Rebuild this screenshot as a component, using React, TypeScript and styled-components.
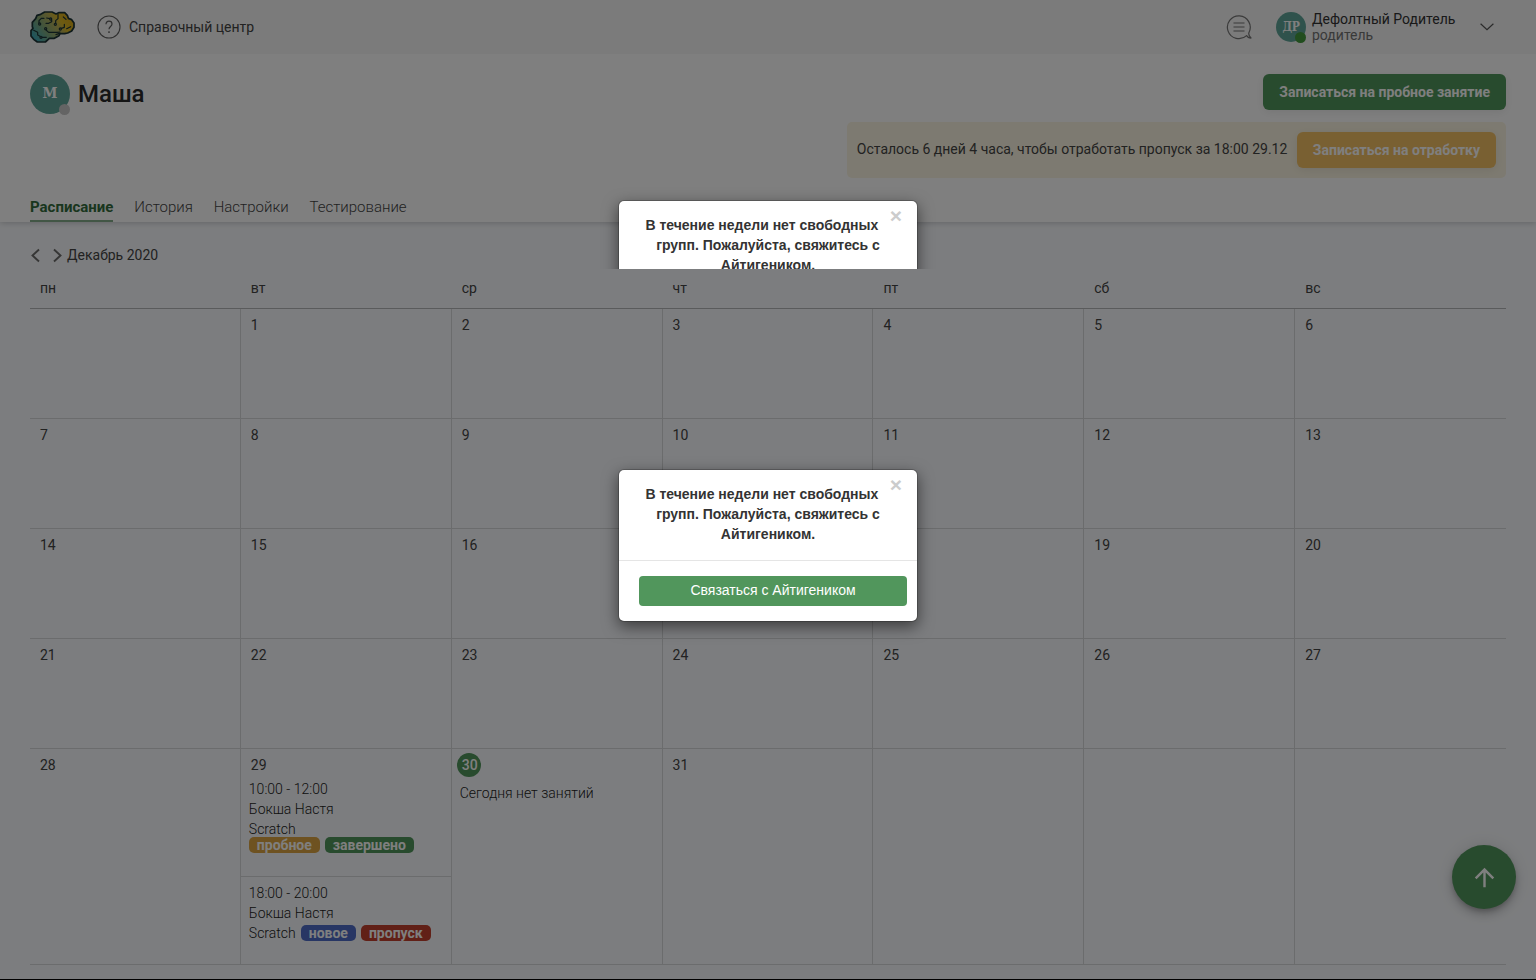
import React from 'react';
import styled, { createGlobalStyle } from 'styled-components';

const GREEN = '#51965c';

const GlobalStyle = createGlobalStyle`
  *, *::before, *::after { box-sizing: border-box; }
  body {
    margin: 0;
    font: 400 14px/20px Roboto, sans-serif;
    color: #444;
    background: #f9fbfe;
  }
  button { font: inherit; border: 0; cursor: pointer; }
`;

const Screen = styled.div`
  position: relative;
  height: 980px;
  overflow: hidden;
  border-bottom: 1px solid #000;
  background: #f9fbfe;
`;

const TopBar = styled.header`
  position: relative;
  z-index: 1;
  display: flex;
  align-items: center;
  height: 54px;
  padding: 0 30px;
  background: #f6f6f6;
`;

const HelpLink = styled.a`
  display: flex;
  align-items: center;
  gap: 8px;
  margin-left: 22px;
  color: #444;
`;

const UserArea = styled.div`
  display: flex;
  align-items: center;
  margin-left: auto;
  padding-right: 12px;
`;

const Avatar = styled.span<{ $size: number; $font: number }>`
  position: relative;
  display: flex;
  flex: none;
  align-items: center;
  justify-content: center;
  width: ${(p) => p.$size}px;
  height: ${(p) => p.$size}px;
  padding-bottom: 1px;
  border-radius: 50%;
  background: #5fa598;
  color: #fff;
  font: 700 ${(p) => p.$font}px/1 'DejaVu Serif Condensed', 'DejaVu Serif', serif;
  font-stretch: condensed;
`;

const UserAvatar = styled(Avatar)`
  margin-left: 24.5px;
  letter-spacing: -0.4px;
`;

const Status = styled.i<{ $online?: boolean }>`
  position: absolute;
  right: 0;
  bottom: -1px;
  width: 11px;
  height: 11px;
  border-radius: 50%;
  background: ${(p) => (p.$online ? '#439a3c' : '#c8c8c8')};
`;

const UserText = styled.div`
  width: 144px;
  margin: 0 24px 0 6px;
  line-height: 16px;
  white-space: nowrap;
  color: #333;
`;

const Role = styled.div`
  color: #737373;
`;

const Profile = styled.section`
  display: flex;
  flex-direction: column;
  height: 168px;
  padding: 20px 30px 0;
  background: #fff;
  box-shadow: 0 1px 6px rgba(0, 0, 0, 0.2);
`;

const ProfileTop = styled.div`
  display: flex;
  justify-content: space-between;
`;

const Person = styled.div`
  display: flex;
  align-items: center;
  gap: 8px;
  height: 40px;
`;

const PersonName = styled.h1`
  margin: 0;
  font-size: 24px;
  font-weight: 500;
  line-height: 28px;
  color: #2a2a2a;
`;

const Actions = styled.div`
  display: flex;
  flex-direction: column;
  align-items: flex-end;
  gap: 12px;
`;

const ActionButton = styled.button<{ $color: string }>`
  height: 36px;
  padding: 0 16px;
  border-radius: 6px;
  background: ${(p) => p.$color};
  box-shadow: 0 2px 10px rgba(0, 0, 0, 0.08);
  color: #fff;
  font-weight: 700;
  white-space: nowrap;
`;

const Notice = styled.div`
  display: flex;
  gap: 9.5px;
  height: 56px;
  padding: 10px 10px 10px 9.5px;
  border-radius: 5px;
  background: #fbf5e2;
`;

const NoticeText = styled.span`
  line-height: 34px;
`;

const Tabs = styled.nav`
  display: flex;
  gap: 20.9px;
  margin-top: auto;
`;

const Tab = styled.a<{ $active?: boolean }>`
  height: 26px;
  border-bottom: 2px solid ${(p) => (p.$active ? '#84ac8a' : 'transparent')};
  color: ${(p) => (p.$active ? '#336c3d' : '#444')};
  font-size: 15px;
  font-weight: ${(p) => (p.$active ? 700 : 300)};
  line-height: 22px;
`;

const Content = styled.main`
  padding: 23px 30px 0;
`;

const MonthNav = styled.div`
  display: flex;
  align-items: center;
  gap: 5px;
  height: 20px;
`;

const MonthLabel = styled.span`
  margin-left: -5px;
`;

const Week = styled.div<{ $height: number }>`
  display: grid;
  grid-template-columns: repeat(7, minmax(0, 1fr));
  height: ${(p) => p.$height}px;
  border-bottom: 1px solid #d6d8da;
`;

const WeekHeader = styled(Week)`
  margin-top: 4px;
  border-bottom-color: #b4b6b8;
`;

const Weekday = styled.div`
  padding: 9px 10px;
`;

const Day = styled.div`
  border-right: 1px solid #d6d8da;
  &:last-child { border-right: 0; }
`;

const DayNumber = styled.div`
  padding: 6px 10px 0;
`;

const Today = styled.div`
  width: 24px;
  height: 24px;
  margin: 4.4px 0 0 5px;
  padding-left: 5px;
  border-radius: 50%;
  background: ${GREEN};
  color: #fff;
  font-weight: 500;
  line-height: 24px;
`;

const Lesson = styled.div<{ $height: number; $divided?: boolean }>`
  height: ${(p) => p.$height}px;
  padding: ${(p) => (p.$divided ? 4 : 6)}px 8px 0;
  border-bottom: ${(p) => (p.$divided ? '1px solid #d6d8da' : '0')};
  color: #222;
  font-weight: 300;
`;

const LessonRow = styled.div`
  display: flex;
  align-items: center;
  gap: 5px;
`;

const BadgeRow = styled(LessonRow)`
  margin-top: -2px;
`;

const Badge = styled.span<{ $color: string }>`
  height: 16px;
  padding: 0 8px;
  border-radius: 5px;
  background: ${(p) => p.$color};
  color: #fff;
  font-weight: 700;
  line-height: 16px;
`;

const Empty = styled.div`
  padding: 5.5px 8px 0;
  color: #222;
  font-weight: 300;
`;

const ScrollTop = styled.button`
  position: absolute;
  right: 20px;
  bottom: 70px;
  display: flex;
  align-items: center;
  justify-content: center;
  width: 64px;
  height: 64px;
  padding: 0;
  border-radius: 50%;
  background: ${GREEN};
  box-shadow: 0 3px 5px -1px rgba(0, 0, 0, 0.2), 0 6px 10px rgba(0, 0, 0, 0.14), 0 1px 18px rgba(0, 0, 0, 0.12);
`;

const Backdrop = styled.div`
  position: absolute;
  inset: 0;
  z-index: 2;
  background: rgba(0, 0, 0, 0.5);
`;

const ModalLayer = styled.div<{ $height?: number; $top: number }>`
  position: absolute;
  z-index: 3;
  top: 0;
  left: 0;
  right: 0;
  display: flex;
  align-items: flex-start;
  justify-content: center;
  height: ${(p) => (p.$height ? `${p.$height}px` : '100%')};
  padding-top: ${(p) => p.$top}px;
  overflow: hidden;
`;

const Modal = styled.div`
  width: 300px;
  flex: none;
  border: 1px solid rgba(0, 0, 0, 0.2);
  border-radius: 6px;
  background: #fff;
  background-clip: padding-box;
  box-shadow: 0 5px 15px rgba(0, 0, 0, 0.5);
  font-family: 'Liberation Sans', Arial, sans-serif;
  color: #333;
`;

const ModalHeader = styled.div`
  height: 91px;
  padding: 14px 15px 15px;
  border-bottom: 1px solid #e5e5e5;
  font-weight: 700;
  text-align: center;
`;

const Close = styled.button`
  float: right;
  height: 18px;
  margin-top: -10px;
  padding: 0;
  background: none;
  color: #ccc;
  font-size: 21px;
  font-weight: 700;
  line-height: 21px;
`;

const ModalFooter = styled.div`
  padding: 15px;
`;

const ContactButton = styled.button`
  display: block;
  width: 268px;
  height: 30px;
  margin-left: 5px;
  padding: 0 0 2px;
  border-radius: 4px;
  background: ${GREEN};
  color: #fff;
`;

function BrainLogo() {
  return (
    <svg width="45" height="32" viewBox="90 33 135 96">
      <defs>
        <linearGradient id="brain" x1="0" y1="0.9" x2="1" y2="0.35">
          <stop offset="0" stopColor="#2fa8c6" />
          <stop offset="0.4" stopColor="#84a877" />
          <stop offset="0.65" stopColor="#b8b058" />
          <stop offset="0.78" stopColor="#dcb824" />
          <stop offset="1" stopColor="#d8a818" />
        </linearGradient>
      </defs>
      <g stroke="#1c3436" strokeWidth="5.2" strokeLinejoin="round" strokeLinecap="round">
        <path
          fill="url(#brain)"
          d="M134 36h22l12 6 8-4h18l8 8 3 9 10 4 7 10v13l-7 11-12 6-9 2h-14l-3 6-14 8h-15l-12 11h-24l-11-8-8-10V92l6-7-2-5V67l10-11 4-10 11-3z"
        />
        <g fill="none" strokeWidth="3.6">
          <path d="M117 69v-7l7-7h8M149 56l-9-2M155 60v5l-9 5h-8M167 70v-8l7-6V43M190 51l8 7M138 90l8 7h25l9-1M184 85l9-3v-9M200 86l12-6M120 109l-7-4v-8l-12-6M127 112h12M168 104l10-4" />
          <circle cx="119" cy="72" r="3.2" />
          <circle cx="152" cy="57" r="3.2" />
          <circle cx="166" cy="73" r="3.2" />
          <circle cx="137" cy="86" r="3.2" />
          <circle cx="181" cy="87" r="3.2" />
          <circle cx="123" cy="112" r="3.2" />
        </g>
      </g>
    </svg>
  );
}

function HelpIcon() {
  return (
    <svg width="24" height="24" viewBox="0 0 24 24" fill="none" stroke="#5e5e5e" strokeWidth="1.1">
      <circle cx="12" cy="12" r="11" />
      <path d="M9 9.2c0-1.9 1.2-3 3-3s3 1.1 3 2.8c0 2.4-3 2.7-3 5.3" strokeWidth="1.2" />
      <path d="M12 16.2v1.7" strokeWidth="1.4" />
    </svg>
  );
}

function ChatIcon() {
  return (
    <svg width="26" height="26" viewBox="0 0 26 26" fill="none" stroke="#757575" strokeWidth="1.2">
      <path
        d="M20.6 21.6A11.4 11.4 0 1 1 23 18.4c-.5 1.3-.3 3.4 2 5.6-1.9.3-3.3-.6-4.4-2.4z"
        strokeLinejoin="round"
      />
      <path d="M7.5 9h11M7.5 13h11M7.5 17h11" />
    </svg>
  );
}

function Arrow({ next }: { next?: boolean }) {
  return (
    <svg width="16" height="20" viewBox="0 0 16 20" fill="none" stroke="#6c6c6c" strokeWidth="1.9">
      <path d={next ? 'M3 4.5l6.500 6-6.500 6' : 'M9 4.5l-6.500 6 6.500 6'} />
    </svg>
  );
}

function NoGroupsModal({ withFooter }: { withFooter?: boolean }) {
  return (
    <Modal>
      <ModalHeader>
        <Close aria-label="Закрыть">×</Close>
        В течение недели нет свободных групп. Пожалуйста, свяжитесь с Айтигеником.
      </ModalHeader>
      {withFooter && (
        <ModalFooter>
          <ContactButton>Связаться с Айтигеником</ContactButton>
        </ModalFooter>
      )}
    </Modal>
  );
}

const WEEKDAYS = ['пн', 'вт', 'ср', 'чт', 'пт', 'сб', 'вс'];

const WEEKS: (number | null)[][] = [
  [null, 1, 2, 3, 4, 5, 6],
  [7, 8, 9, 10, 11, 12, 13],
  [14, 15, 16, 17, 18, 19, 20],
  [21, 22, 23, 24, 25, 26, 27],
  [28, 29, 30, 31, null, null, null],
];

function DayContent({ day }: { day: number | null }) {
  if (day === null) return null;
  if (day === 30) {
    return (
      <>
        <Today>30</Today>
        <Empty>Сегодня нет занятий</Empty>
      </>
    );
  }
  return (
    <>
      <DayNumber>{day}</DayNumber>
      {day === 29 && (
        <>
          <Lesson $height={102} $divided>
            <div>10:00 - 12:00</div>
            <div>Бокша Настя</div>
            <div>Scratch</div>
            <BadgeRow>
              <Badge $color="#dca443">пробное</Badge>
              <Badge $color={GREEN}>завершено</Badge>
            </BadgeRow>
          </Lesson>
          <Lesson $height={87}>
            <div>18:00 - 20:00</div>
            <div>Бокша Настя</div>
            <LessonRow>
              Scratch
              <Badge $color="#4f6dc8">новое</Badge>
              <Badge $color="#c2402e">пропуск</Badge>
            </LessonRow>
          </Lesson>
        </>
      )}
    </>
  );
}

export default function App() {
  return (
    <Screen>
      <GlobalStyle />
      <TopBar>
        <BrainLogo />
        <HelpLink>
          <HelpIcon />
          Справочный центр
        </HelpLink>
        <UserArea>
          <ChatIcon />
          <UserAvatar $size={30} $font={12}>
            ДР
            <Status $online />
          </UserAvatar>
          <UserText>
            Дефолтный Родитель
            <Role>родитель</Role>
          </UserText>
          <svg width="14" height="8" viewBox="0 0 14 8" fill="none" stroke="#555" strokeWidth="1.2">
            <path d="M.6.7l6.400 6 6.400-6" />
          </svg>
        </UserArea>
      </TopBar>

      <Profile>
        <ProfileTop>
          <Person>
            <Avatar $size={40} $font={15}>
              М
              <Status />
            </Avatar>
            <PersonName>Маша</PersonName>
          </Person>
          <Actions>
            <ActionButton $color={GREEN}>Записаться на пробное занятие</ActionButton>
            <Notice>
              <NoticeText>Осталось 6 дней 4 часа, чтобы отработать пропуск за 18:00 29.12</NoticeText>
              <ActionButton $color="#f3c064">Записаться на отработку</ActionButton>
            </Notice>
          </Actions>
        </ProfileTop>
        <Tabs>
          <Tab $active>Расписание</Tab>
          <Tab>История</Tab>
          <Tab>Настройки</Tab>
          <Tab>Тестирование</Tab>
        </Tabs>
      </Profile>

      <Content>
        <MonthNav>
          <Arrow />
          <Arrow next />
          <MonthLabel>Декабрь 2020</MonthLabel>
        </MonthNav>
        <WeekHeader $height={40}>
          {WEEKDAYS.map((name) => (
            <Weekday key={name}>{name}</Weekday>
          ))}
        </WeekHeader>
        {WEEKS.map((week, row) => (
          <Week key={row} $height={row === 4 ? 216 : 110}>
            {week.map((day, col) => (
              <Day key={col}>
                <DayContent day={day} />
              </Day>
            ))}
          </Week>
        ))}
      </Content>

      <ScrollTop aria-label="Наверх">
        <svg width="29" height="29" viewBox="0 0 24 24" fill="#fff">
          <path d="M4 12l1.410 1.410L11 7.830V20h2V7.830l5.580 5.590L20 12l-8-8-8 8z" />
        </svg>
      </ScrollTop>

      <Backdrop />
      <ModalLayer $top={200} $height={269}>
        <NoGroupsModal />
      </ModalLayer>
      <ModalLayer $top={469}>
        <NoGroupsModal withFooter />
      </ModalLayer>
    </Screen>
  );
}
